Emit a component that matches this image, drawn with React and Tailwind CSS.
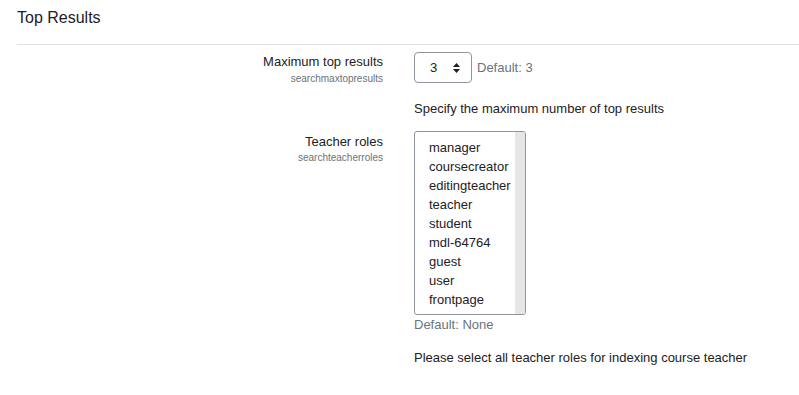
import React from 'react';

const roles = [
  'manager',
  'coursecreator',
  'editingteacher',
  'teacher',
  'student',
  'mdl-64764',
  'guest',
  'user',
  'frontpage',
];

const Label = ({ title, name, className = '' }) => (
  <div className={`w-[366px] shrink-0 text-right ${className}`}>
    <div className="text-[13px] leading-[19.5px] text-[#1d2125]">{title}</div>
    <div className="text-[10px] leading-[14px] text-[#6a737b]">{name}</div>
  </div>
);

const App = () => {
  return (
    <div
      className="w-[799px] h-[395px] bg-white pl-[17px] overflow-hidden"
      style={{ fontFamily: '"Liberation Sans", Arial, sans-serif' }}
    >
      {/* Section heading */}
      <h3 className="pt-[8px] text-[16px] leading-[20px] text-[#1d2125]">Top Results</h3>
      <div className="mt-[16px] border-t border-[#dee2e6]" />

      {/* Maximum top results */}
      <div className="flex pt-[7px]">
        <Label title="Maximum top results" name="searchmaxtopresults" />
        <div className="ml-[31px]">
          <div className="flex items-center">
            <div className="flex items-center w-[58px] h-[31px] border border-[#8f959e] rounded-[4px] pl-[15px] pr-[10px]">
              <span className="text-[13px] text-[#1d2125]">3</span>
              <svg className="ml-auto" width="9" height="12" viewBox="0 0 9 12">
                <path d="M4.5 1 L8 5 L1 5 Z" fill="#1d2125" />
                <path d="M4.5 11 L8 7 L1 7 Z" fill="#1d2125" />
              </svg>
            </div>
            <span className="ml-[5px] text-[13px] text-[#6a737b]">Default: 3</span>
          </div>
          <div className="mt-[16px] text-[13px] leading-[19.5px] text-[#1d2125]">
            Specify the maximum number of top results
          </div>
        </div>
      </div>

      {/* Teacher roles */}
      <div className="flex mt-[12px]">
        <Label title="Teacher roles" name="searchteacherroles" className="pt-[1px]" />
        <div className="ml-[31px]">
          <div className="flex w-[112px] h-[184px] border border-[#8f959e] rounded-[3px] overflow-hidden">
            <div className="flex-1 pt-[6px] pl-[14px]">
              {roles.map((r) => (
                <div key={r} className="text-[13px] leading-[19px] text-[#1d2125] whitespace-nowrap">
                  {r}
                </div>
              ))}
            </div>
            <div className="w-[10px] bg-[#e6e6e6]" />
          </div>
          <div className="text-[13px] leading-[19.5px] text-[#6a737b]">Default: None</div>
          <div className="mt-[14px] text-[13px] leading-[19.5px] text-[#1d2125]">
            Please select all teacher roles for indexing course teacher
          </div>
        </div>
      </div>
    </div>
  );
};

export default App;
